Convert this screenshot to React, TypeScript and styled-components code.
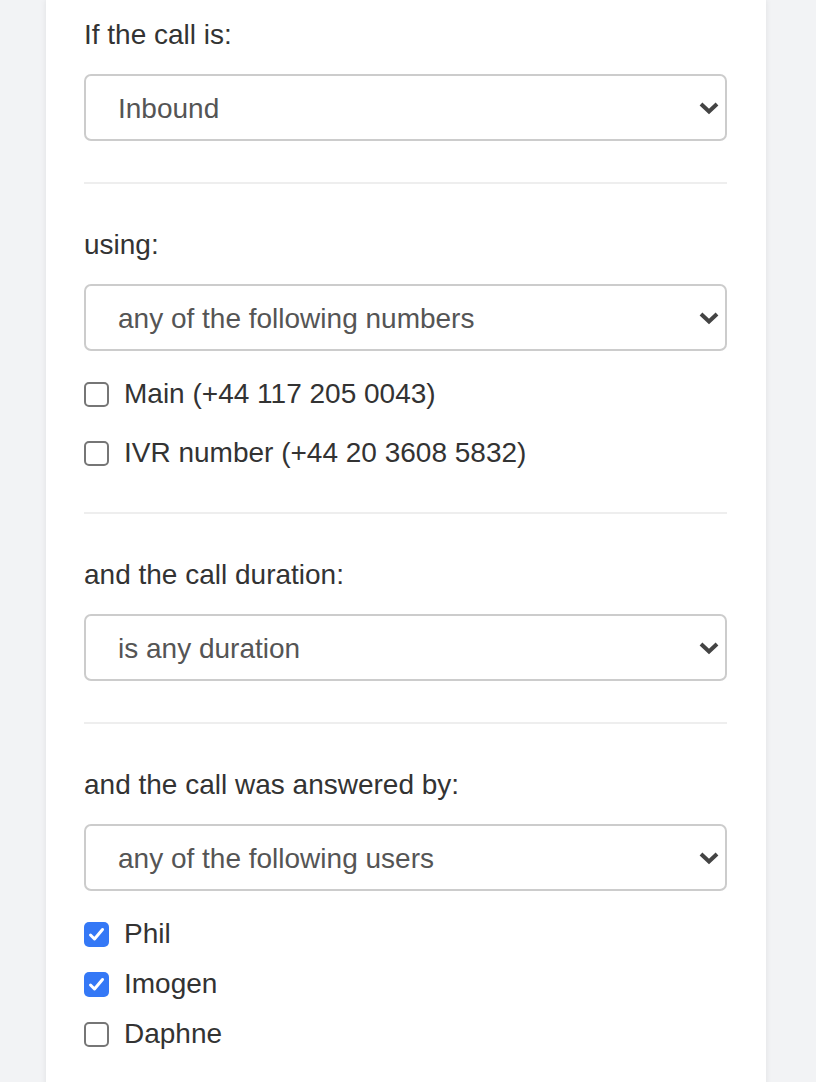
import styled, { createGlobalStyle } from 'styled-components'

const GlobalStyle = createGlobalStyle`
  html, body {
    margin: 0;
    padding: 0;
    background-color: #f2f3f5;
  }
  body {
    font-family: "Liberation Sans", Arial, sans-serif;
    color: #333;
  }
`

const Page = styled.div`
  width: 816px;
  height: 1082px;
  overflow: hidden;
  background-color: #f2f3f5;
`
const Card = styled.div`
  margin-left: 46px;
  width: 720px;
  min-height: 1082px;
  box-sizing: border-box;
  padding: 0 39px 0 38px;
  background-color: #fff;
  box-shadow: 0 0 6px rgba(0, 0, 0, 0.08);
`
const Section = styled.div<{ $first?: boolean; $last?: boolean }>`
  padding-top: ${(p) => (p.$first ? '18px' : '44px')};
  padding-bottom: 41px;
  border-bottom: ${(p) => (p.$last ? 'none' : '2px solid #eeeeee')};
`
const Label = styled.div`
  font-size: 28px;
  line-height: 34px;
  margin-bottom: 22px;
`
const SelectBox = styled.div`
  position: relative;
  height: 67px;
  box-sizing: border-box;
  border: 2px solid #cccccc;
  border-radius: 7px;
  display: flex;
  align-items: center;
  padding: 3px 0 0 32px;
  font-size: 28px;
  color: #555;
`
const Chevron = styled.svg`
  position: absolute;
  right: 5px;
  top: 50%;
  margin-top: -8px;
`
const Options = styled.div<{ $gap: number }>`
  display: flex;
  flex-direction: column;
  gap: ${(p) => p.$gap}px;
  margin-top: 26px;
  margin-bottom: ${(p) => (p.$gap > 20 ? 1 : 0)}px;
`
const OptionRow = styled.label`
  display: flex;
  align-items: center;
  gap: 15px;
  font-size: 28px;
  line-height: 34px;
  color: #333;
`
const Box = styled.span<{ $checked: boolean }>`
  width: 25px;
  height: 25px;
  box-sizing: border-box;
  border-radius: 5px;
  border: ${(p) => (p.$checked ? 'none' : '2px solid #767676')};
  background-color: ${(p) => (p.$checked ? '#3478f6' : '#fff')};
  display: flex;
  align-items: center;
  justify-content: center;
  flex-shrink: 0;
`

interface Option {
  label: string
  checked: boolean
}

const Select = ({ value }: { value: string }) => (
  <SelectBox>
    {value}
    <Chevron width="22" height="16" viewBox="0 0 22 16">
      <path d="M3 4 L11 11.5 L19 4" fill="none" stroke="#444" strokeWidth="4" />
    </Chevron>
  </SelectBox>
)

const Checkbox = ({ checked }: { checked: boolean }) => (
  <Box $checked={checked}>
    {checked && (
      <svg width="17" height="17" viewBox="0 0 17 17">
        <path d="M2.5 9 L6.5 13 L14.5 3.5" fill="none" stroke="#fff" strokeWidth="3" strokeLinecap="round" strokeLinejoin="round" />
      </svg>
    )}
  </Box>
)

const numbers: Option[] = [
  { label: 'Main (+44 117 205 0043)', checked: false },
  { label: 'IVR number (+44 20 3608 5832)', checked: false },
]

const users: Option[] = [
  { label: 'Phil', checked: true },
  { label: 'Imogen', checked: true },
  { label: 'Daphne', checked: false },
]

const OptionList = ({ items, gap }: { items: Option[]; gap: number }) => (
  <Options $gap={gap}>
    {items.map((item) => (
      <OptionRow key={item.label}>
        <Checkbox checked={item.checked} />
        {item.label}
      </OptionRow>
    ))}
  </Options>
)

export default function App() {
  return (
    <Page>
      <GlobalStyle />
      <Card>
        <Section $first>
          <Label>If the call is:</Label>
          <Select value="Inbound" />
        </Section>
        <Section>
          <Label>using:</Label>
          <Select value="any of the following numbers" />
          <OptionList items={numbers} gap={25} />
        </Section>
        <Section>
          <Label>and the call duration:</Label>
          <Select value="is any duration" />
        </Section>
        <Section $last>
          <Label>and the call was answered by:</Label>
          <Select value="any of the following users" />
          <OptionList items={users} gap={16} />
        </Section>
      </Card>
    </Page>
  )
}
